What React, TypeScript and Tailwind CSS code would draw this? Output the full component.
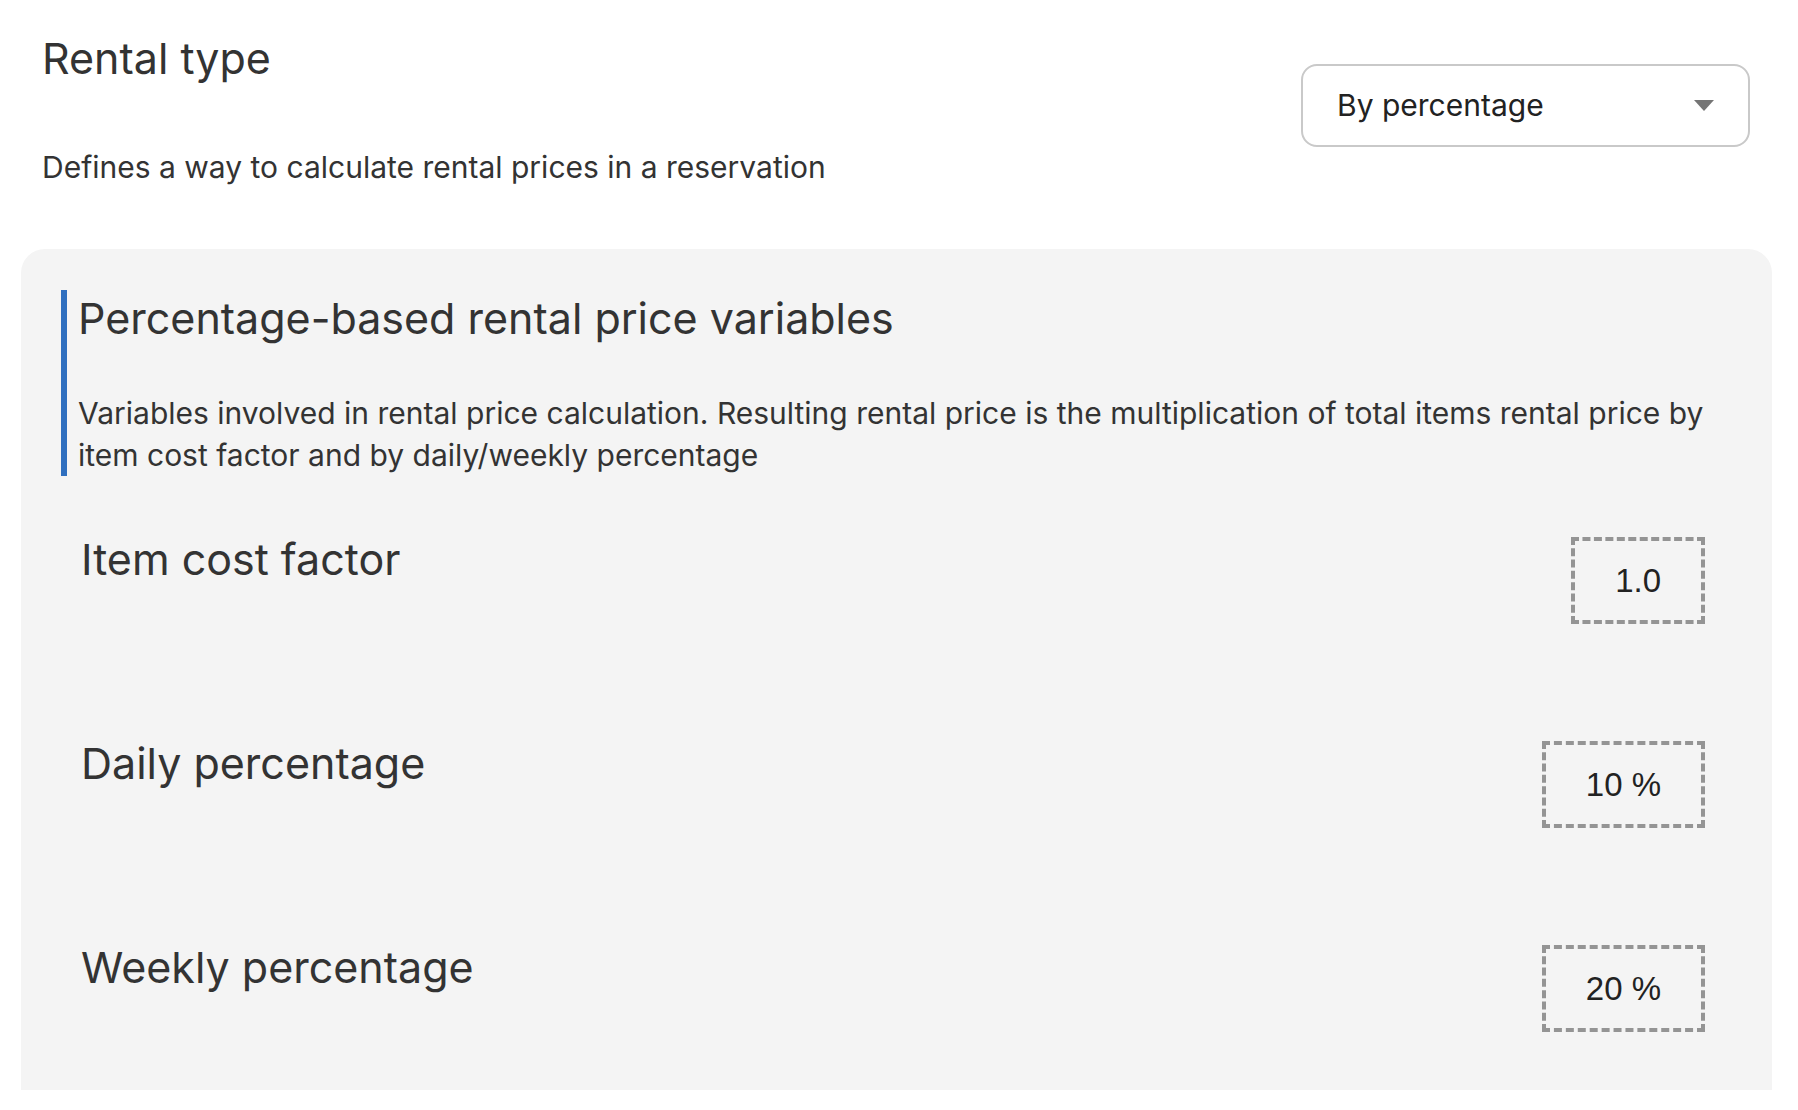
import React from "react";

type Row = { label: string; value: string };

const rows: Row[] = [
  { label: "Item cost factor", value: "1.0" },
  { label: "Daily percentage", value: "10 %" },
  { label: "Weekly percentage", value: "20 %" },
];

function SelectBox({ value }: { value: string }) {
  return (
    <div className="mt-[34px] w-[449px] h-[83px] rounded-[16px] border-2 border-[#c9c9c9] bg-white flex items-center justify-between pl-[34px] pr-[34px]">
      <span className="text-[30px] text-[#222222]">{value}</span>
      <svg width="20" height="11" viewBox="0 0 20 11">
        <path d="M0 0 L20 0 L10 11 Z" fill="#757575" />
      </svg>
    </div>
  );
}

function ValueBox({ value }: { value: string }) {
  return (
    <div
      className="h-[87px] px-[40px] border-4 border-dashed border-[#949494] flex items-center justify-center text-[33px] text-[#222222]"
      style={{ fontFamily: '"Liberation Sans", Arial, sans-serif' }}
    >
      {value}
    </div>
  );
}

export default function App() {
  return (
    <div
      className="w-[1798px] h-[1110px] bg-white overflow-hidden pl-[21px] pr-[26px] text-[#333333]"
      style={{ fontFamily: 'Inter, "Noto Sans", sans-serif' }}
    >
      <div className="flex items-start justify-between pl-[21px] pr-[22px] pt-[30px]">
        <div>
          <h2 className="text-[43px] leading-[56px] font-normal">Rental type</h2>
          <p className="mt-[63px] text-[30px] leading-[36px]">
            Defines a way to calculate rental prices in a reservation
          </p>
        </div>
        <SelectBox value="By percentage" />
      </div>

      <div className="mt-[64px] h-[841px] rounded-t-[24px] bg-[#f4f4f4] pt-[41px] pl-[40px] pr-[67px]">
        <div className="border-l-[6px] border-[#2f6fbf] pl-[11px]">
          <h3 className="text-[43px] leading-[56px]">Percentage-based rental price variables</h3>
          <p className="mt-[46px] text-[30px] leading-[42px]">
            Variables involved in rental price calculation. Resulting rental price is the multiplication of total items rental price by item cost factor and by daily/weekly percentage
          </p>
        </div>

        <div className="mt-[61px] flex flex-col gap-[117px] pl-[20px]">
          {rows.map((r) => (
            <div key={r.label} className="flex items-start justify-between">
              <span className="text-[43px] leading-[44px]">{r.label}</span>
              <ValueBox value={r.value} />
            </div>
          ))}
        </div>
      </div>
    </div>
  );
}
